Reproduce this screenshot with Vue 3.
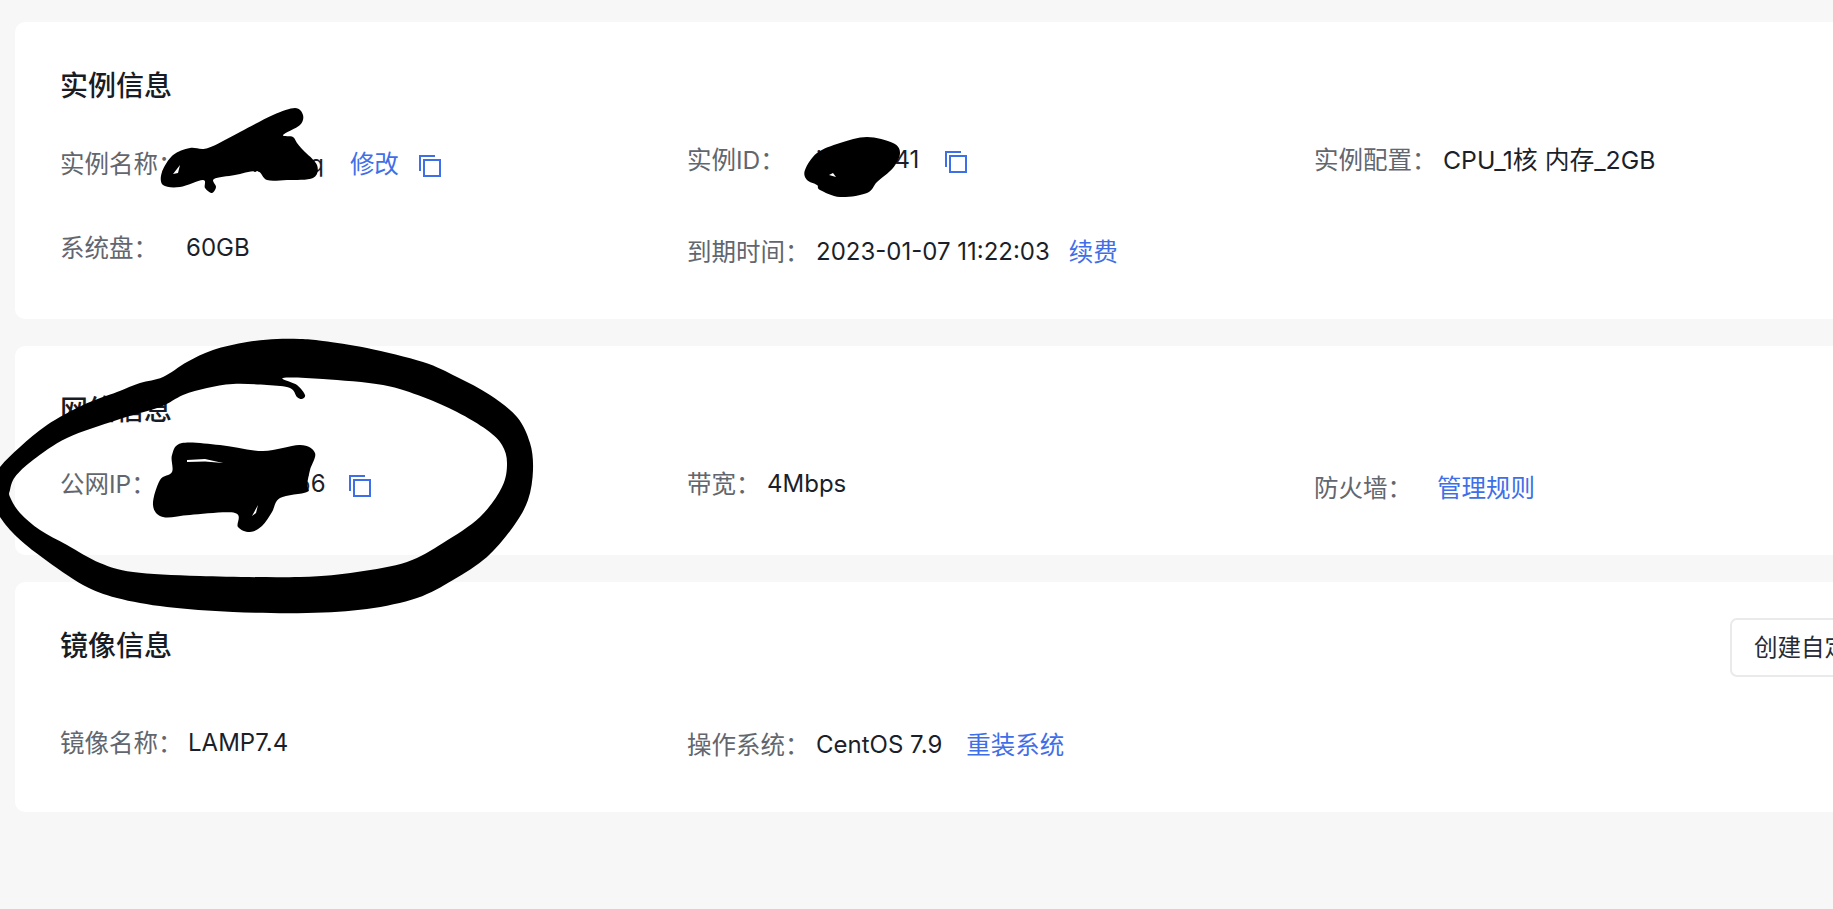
<script setup>
const smooth = (pts) => {
  const n = pts.length
  let d = `M${pts[0][0]} ${pts[0][1]}`
  for (let i = 0; i < n; i++) {
    const p0 = pts[(i - 1 + n) % n], p1 = pts[i], p2 = pts[(i + 1) % n], p3 = pts[(i + 2) % n]
    const c1 = [p1[0] + (p2[0] - p0[0]) / 6, p1[1] + (p2[1] - p0[1]) / 6]
    const c2 = [p2[0] - (p3[0] - p1[0]) / 6, p2[1] - (p3[1] - p1[1]) / 6]
    d += `C${c1[0].toFixed(1)} ${c1[1].toFixed(1)} ${c2[0].toFixed(1)} ${c2[1].toFixed(1)} ${p2[0]} ${p2[1]}`
  }
  return d + 'Z'
}

const ringOuter = [
  [163,377],[187,362],[213,350],[247,342],[277,339],[300,339],[323,341],[367,348],[423,362],[457,377],[490,395],[517,417],[530,443],[533,470],[528,500],[513,527],[487,557],[453,580],[417,598],[367,609],[307,613],[233,612],[167,607],[117,598],[83,585],[43,558],[17,537],[0,517],[-15,490],[0,467],[20,447],[47,425],[83,405],[117,392],[140,383]
]
const ringInner = [
  [10,497],[20,513],[40,530],[67,545],[100,563],[133,572],[200,576],[300,577],[357,572],[407,562],[443,543],[480,517],[502,487],[507,463],[502,445],[487,430],[457,412],[423,397],[383,385],[323,379],[283,378],[297,385],[305,395],[302,399],[297,397],[290,388],[267,385],[233,384],[207,388],[183,395],[160,407],[117,420],[67,438],[33,460],[15,477],[10,490]
]
const nameBlob = [
  [303,115],[295,108],[273,115],[240,132],[208,148],[190,148],[173,155],[162,172],[163,185],[180,187],[203,180],[205,188],[212,193],[216,187],[214,179],[235,175],[257,171],[267,180],[287,180],[313,178],[317,165],[303,150],[297,143],[293,137],[283,135],[300,125]
]
const nameHole = [[173,174],[180,165],[178,173]]
const ipBlob = [
  [172,455],[182,443],[220,445],[263,451],[300,445],[315,453],[310,470],[307,485],[307,492],[280,498],[272,512],[262,526],[250,532],[238,527],[235,513],[190,515],[163,517],[153,505],[160,480],[172,472]
]
const ipHoles = [
  [[187,460],[205,459],[223,463],[205,461.5],[187,462]],
  [[252,516],[258,505],[256,513]]
]
const idBlob = [
  [867,137],[893,143],[900,153],[893,168],[877,182],[867,193],[840,197],[820,190],[817,185],[807,180],[805,170],[817,153],[840,143]
]
const idHole = [[829,175],[833,173],[836,177]]

const poly = (pts) => 'M' + pts.map((p) => p.join(' ')).join('L') + 'Z'

const scribbles = [
  smooth(ringOuter) + smooth(ringInner),
  smooth(nameBlob) + poly(nameHole),
  smooth(ipBlob) + ipHoles.map(poly).join(''),
  smooth(idBlob) + poly(idHole)
]
</script>

<template>
  <div class="page">
    <section class="card">
      <h2 class="title">实例信息</h2>
      <div class="grid">
        <div class="item low">
          <span class="label w-name">实例名称：</span>
          <span class="value">xxxxxxxq</span>
          <a class="link gap-26">修改</a>
          <svg class="copy gap-20" viewBox="0 0 22 22"><path d="M1 16V1H16" /><rect x="5" y="5" width="16" height="16" /></svg>
        </div>
        <div class="item">
          <span class="label w-long">实例ID：</span>
          <span class="value">i-xxxx141</span>
          <svg class="copy gap-26" viewBox="0 0 22 22"><path d="M1 16V1H16" /><rect x="5" y="5" width="16" height="16" /></svg>
        </div>
        <div class="item">
          <span class="label w-long">实例配置：</span>
          <span class="value value-wide">CPU_1核 内存_2GB</span>
        </div>
        <div class="item">
          <span class="label w-disk">系统盘：</span>
          <span class="value">60GB</span>
        </div>
        <div class="item low">
          <span class="label w-long">到期时间：</span>
          <span class="value">2023-01-07 11:22:03</span>
          <a class="link gap-19">续费</a>
        </div>
      </div>
    </section>

    <section class="card">
      <h2 class="title">网络信息</h2>
      <div class="grid">
        <div class="item">
          <span class="label w-ip">公网IP：</span>
          <span class="value">xxx.xxx.56</span>
          <svg class="copy gap-23" viewBox="0 0 22 22"><path d="M1 16V1H16" /><rect x="5" y="5" width="16" height="16" /></svg>
        </div>
        <div class="item">
          <span class="label w-band">带宽：</span>
          <span class="value">4Mbps</span>
        </div>
        <div class="item low">
          <span class="label w-fire">防火墙：</span>
          <a class="link">管理规则</a>
        </div>
      </div>
    </section>

    <section class="card card-image">
      <div class="head">
        <h2 class="title title-flat">镜像信息</h2>
        <button class="btn" type="button">创建自定义镜像</button>
      </div>
      <div class="grid">
        <div class="item mid">
          <span class="label w-image">镜像名称：</span>
          <span class="value">LAMP7.4</span>
        </div>
        <div class="item low">
          <span class="label w-long">操作系统：</span>
          <span class="value">CentOS 7.9</span>
          <a class="link gap-24">重装系统</a>
        </div>
      </div>
    </section>

    <svg class="scribble" viewBox="0 0 1833 909" aria-hidden="true">
      <path v-for="(d, i) in scribbles" :key="i" :d="d" />
    </svg>
  </div>
</template>

<style>
html, body { margin: 0; background: #f7f7f7; overflow: hidden; }
</style>

<style scoped>
.page {
  position: relative;
  box-sizing: border-box;
  width: 1833px;
  height: 909px;
  overflow: hidden;
  padding: 22px 0 0 15px;
  display: flex;
  flex-direction: column;
  gap: 27px;
  background: #f7f7f7;
  font-family: Inter, "Noto Sans CJK SC", sans-serif;
}
.card {
  box-sizing: border-box;
  flex: none;
  width: 1981px;
  padding: 46px 46px 50px 45px;
  background: #fff;
  border-radius: 10px;
}
.card-image { padding-top: 36px; }
.title {
  margin: 0;
  font-size: 28px;
  line-height: 36px;
  font-weight: 500;
  color: #181c25;
}
.head {
  display: flex;
  align-items: center;
  justify-content: space-between;
  height: 59px;
}
.title-flat { margin-top: -3px; }
.btn {
  box-sizing: border-box;
  width: 220px;
  height: 59px;
  padding: 0 22px;
  background: #fff;
  border: 2px solid #e9eaec;
  border-radius: 7px;
  font: 400 23.5px/1 Inter, "Noto Sans CJK SC", sans-serif;
  color: #272b35;
  white-space: nowrap;
  text-align: left;
}
.grid {
  display: grid;
  grid-template-columns: repeat(3, 627px);
  row-gap: 50px;
  align-items: start;
  margin-top: 39px;
}
.card-image .grid { margin-top: 47px; }
.item {
  display: flex;
  align-items: center;
  height: 34px;
  font-size: 24px;
  line-height: 34px;
  white-space: nowrap;
}
.low { margin-top: 4px; }
.mid { margin-top: 2px; }
.label { flex: none; font-size: 24.5px; color: #62666e; }
.value { color: #1b1f2a; }
.value-wide { font-size: 24.8px; }
.link { font-size: 24.5px; color: #3f6fe8; cursor: pointer; }
.w-name { width: 120px; margin-right: 38px; }
.w-long { width: 129px; }
.w-disk { width: 126px; }
.w-ip { width: 120px; margin-right: 24px; }
.w-band { width: 80px; }
.w-fire { width: 123px; }
.w-image { width: 128px; }
.gap-19 { margin-left: 19px; }
.gap-20 { margin-left: 20px; }
.gap-23 { margin-left: 23px; }
.gap-24 { margin-left: 24px; }
.gap-26 { margin-left: 26px; }
.copy {
  flex: none;
  width: 22px;
  height: 22px;
  margin-top: 3px;
  fill: none;
  stroke: #3f6fe8;
  stroke-width: 2;
}
.scribble {
  position: absolute;
  left: 0;
  top: 0;
  width: 1833px;
  height: 909px;
  pointer-events: none;
  fill: #000;
  fill-rule: evenodd;
}
</style>
